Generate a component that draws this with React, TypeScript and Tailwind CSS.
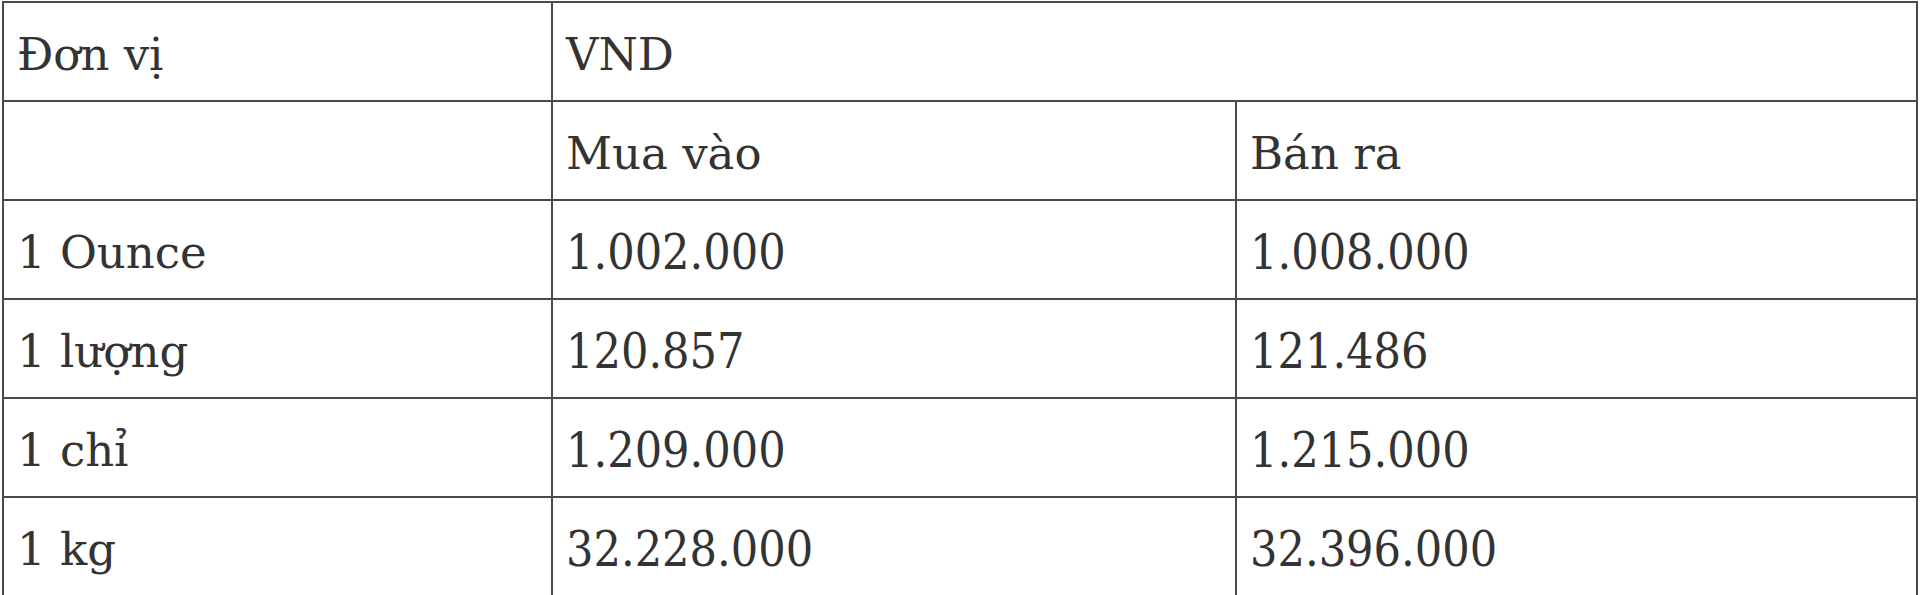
const rows = [
  ["1 Ounce", "1.002.000", "1.008.000"],
  ["1 lượng", "120.857", "121.486"],
  ["1 chỉ", "1.209.000", "1.215.000"],
  ["1 kg", "32.228.000", "32.396.000"],
];

const cell = "border-2 border-[#4a4a4a] px-[13px] pt-[5px] text-left align-middle font-normal";
const word = `${cell} font-['DejaVu_Serif',serif] text-[45px]`;
const num = `${cell} font-['DejaVu_Serif_Condensed','DejaVu_Serif',serif] [font-stretch:condensed] text-[48px]`;

export default function App() {
  return (
    <div className="min-h-[595px] bg-white pl-[2px] pt-[1px] leading-none text-[#333]">
      <table className="w-[1916px] table-fixed border-collapse border-2 border-[#333]">
        <colgroup>
          <col className="w-[549px]" />
          <col className="w-[684px]" />
          <col />
        </colgroup>
        <tbody>
          <tr className="h-[99px]">
            <td className={word}>Đơn vị</td>
            <td className={word} colSpan={2}>
              VND
            </td>
          </tr>
          <tr className="h-[99px]">
            <td className={word}></td>
            <td className={word}>Mua vào</td>
            <td className={word}>Bán ra</td>
          </tr>
          {rows.map((r) => (
            <tr className="h-[99px]" key={r[0]}>
              <td className={word}>{r[0]}</td>
              <td className={num}>{r[1]}</td>
              <td className={num}>{r[2]}</td>
            </tr>
          ))}
        </tbody>
      </table>
    </div>
  );
}
